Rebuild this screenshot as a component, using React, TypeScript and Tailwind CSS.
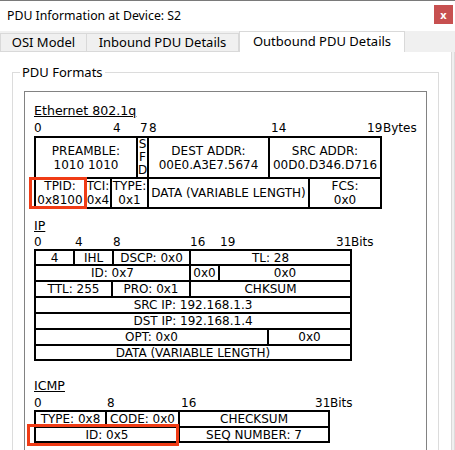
import React from 'react';

const ui = { fontFamily: '"Noto Sans", "Liberation Sans", sans-serif' };
const mono = { fontFamily: '"DejaVu Sans", Verdana, sans-serif' };

const CELL =
  'flex flex-col items-center justify-center shrink-0 border-r-2 border-b-2 border-black text-center whitespace-nowrap';

function Cell({ className, children }: { className: string; children: React.ReactNode }) {
  return <div className={`${CELL} ${className}`}>{children}</div>;
}

// ruler of byte / bit offsets above each header table
function Ruler({ marks, unit }: { marks: { label: string; w: string }[]; unit: string }) {
  return (
    <div className="flex leading-[13px]">
      {marks.map((m, i) => (
        <span key={i} className={`shrink-0 ${m.w}`}>
          {m.label}
        </span>
      ))}
      <span className="shrink-0">{unit}</span>
    </div>
  );
}

function Heading({ children, className }: { children: React.ReactNode; className: string }) {
  return <div className={`underline text-[12.6px] leading-[14px] ${className}`}>{children}</div>;
}

export default function App() {
  return (
    <div className="w-[455px] h-[450px] overflow-hidden bg-white border-t border-[#7a7a7a] flex flex-col text-black">
      {/* Title bar */}
      <div className="h-[30px] shrink-0 flex items-center justify-between pl-[7px] pr-[2px]">
        <span className="text-[12.3px]" style={ui}>
          PDU Information at Device: S2
        </span>
        <div className="w-[19px] h-[19px] mb-[3px] bg-[#c75050] flex items-center justify-center">
          <span className="text-white text-[11px] font-bold leading-none" style={ui}>
            x
          </span>
        </div>
      </div>

      {/* Tabs */}
      <div className="h-[21px] shrink-0 flex items-end bg-[#f0f0f0] text-[13px]" style={ui}>
        <div className="w-[87px] h-[19px] flex items-center justify-center border border-[#d9d9d9] bg-[#f0f0f0]">
          OSI Model
        </div>
        <div className="w-[152px] h-[19px] flex items-center justify-center border-t border-r border-b border-[#d9d9d9] bg-[#f0f0f0]">
          Inbound PDU Details
        </div>
        <div className="w-[166px] h-[21px] flex items-center justify-center border-t border-x border-[#d9d9d9] bg-white pb-[1px]">
          Outbound PDU Details
        </div>
      </div>

      {/* Content */}
      <div className="flex flex-1 min-h-0">
        <div className="w-[452px] shrink-0 bg-white border-r border-[#d9d9d9]">
          <div className="relative mt-[20px] ml-[12px] w-[427px] border border-[#dcdcdc] pl-[11px] pt-[18px] pb-[20px]">
            <span
              className="absolute left-[7px] top-[-9px] px-[2px] bg-white text-[13px] leading-[17px]"
              style={ui}
            >
              PDU Formats
            </span>

            <div className="relative w-[403px] border border-[#828282] pl-[9px] pt-[12px] pb-[20px] text-[12px]" style={mono}>
              {/* Ethernet 802.1q */}
              <Heading className="w-fit">Ethernet 802.1q</Heading>
              <div className="mt-[4px]">
                <Ruler
                  unit="Bytes"
                  marks={[
                    { label: '0', w: 'w-[79px]' },
                    { label: '4', w: 'w-[27px]' },
                    { label: '7', w: 'w-[9px]' },
                    { label: '8', w: 'w-[122px]' },
                    { label: '14', w: 'w-[96px]' },
                    { label: '19', w: 'w-[16px]' },
                  ]}
                />
              </div>
              <div className="mt-[1px] w-[348px] border-l-2 border-t-2 border-black leading-[14px]">
                <div className="flex h-[41px]">
                  <Cell className="w-[102px]">
                    <span>PREAMBLE:</span>
                    <span>1010 1010</span>
                  </Cell>
                  <Cell className="w-[11px] leading-[13px]">
                    <span>S</span>
                    <span>F</span>
                    <span>D</span>
                  </Cell>
                  <Cell className="w-[121px]">
                    <span>DEST ADDR:</span>
                    <span>00E0.A3E7.5674</span>
                  </Cell>
                  <Cell className="w-[112px]">
                    <span>SRC ADDR:</span>
                    <span>00D0.D346.D716</span>
                  </Cell>
                </div>
                <div className="flex h-[30px]">
                  <Cell className="w-[50px]">
                    <span>TPID:</span>
                    <span>0x8100</span>
                  </Cell>
                  <Cell className="w-[26px]">
                    <span>TCI:</span>
                    <span>0x4</span>
                  </Cell>
                  <Cell className="w-[37px]">
                    <span>TYPE:</span>
                    <span>0x1</span>
                  </Cell>
                  <Cell className="w-[161px]">DATA (VARIABLE LENGTH)</Cell>
                  <Cell className="w-[72px]">
                    <span>FCS:</span>
                    <span>0x0</span>
                  </Cell>
                </div>
              </div>

              {/* IP */}
              <Heading className="w-fit mt-[10px]">IP</Heading>
              <div className="mt-[3px]">
                <Ruler
                  unit="Bits"
                  marks={[
                    { label: '0', w: 'w-[41px]' },
                    { label: '4', w: 'w-[38px]' },
                    { label: '8', w: 'w-[77px]' },
                    { label: '16', w: 'w-[30px]' },
                    { label: '19', w: 'w-[116px]' },
                    { label: '31', w: 'w-[15px]' },
                  ]}
                />
              </div>
              <div className="w-[318px] border-l-2 border-t-2 border-black leading-[14px]">
                <div className="flex h-[15px]">
                  <Cell className="w-[39px]">4</Cell>
                  <Cell className="w-[39px]">IHL</Cell>
                  <Cell className="w-[77px]">DSCP: 0x0</Cell>
                  <Cell className="w-[161px]">TL: 28</Cell>
                </div>
                <div className="flex h-[16px]">
                  <Cell className="w-[155px]">ID: 0x7</Cell>
                  <Cell className="w-[29px]">0x0</Cell>
                  <Cell className="w-[132px]">0x0</Cell>
                </div>
                <div className="flex h-[16px]">
                  <Cell className="w-[77px]">TTL: 255</Cell>
                  <Cell className="w-[78px]">PRO: 0x1</Cell>
                  <Cell className="w-[161px]">CHKSUM</Cell>
                </div>
                <div className="flex h-[16px]">
                  <Cell className="w-[316px]">SRC IP: 192.168.1.3</Cell>
                </div>
                <div className="flex h-[16px]">
                  <Cell className="w-[316px]">DST IP: 192.168.1.4</Cell>
                </div>
                <div className="flex h-[16px]">
                  <Cell className="w-[233px]">OPT: 0x0</Cell>
                  <Cell className="w-[83px]">0x0</Cell>
                </div>
                <div className="flex h-[15px]">
                  <Cell className="w-[316px]">DATA (VARIABLE LENGTH)</Cell>
                </div>
              </div>

              {/* ICMP */}
              <Heading className="w-fit mt-[18px]">ICMP</Heading>
              <div className="mt-[4px]">
                <Ruler
                  unit="Bits"
                  marks={[
                    { label: '0', w: 'w-[73px]' },
                    { label: '8', w: 'w-[74px]' },
                    { label: '16', w: 'w-[134px]' },
                    { label: '31', w: 'w-[15px]' },
                  ]}
                />
              </div>
              <div className="w-[296px] border-l-2 border-t-2 border-black leading-[14px]">
                <div className="flex h-[16px]">
                  <Cell className="w-[71px]">TYPE: 0x8</Cell>
                  <Cell className="w-[73px]">CODE: 0x0</Cell>
                  <Cell className="w-[150px]">CHECKSUM</Cell>
                </div>
                <div className="flex h-[15px]">
                  <Cell className="w-[144px]">ID: 0x5</Cell>
                  <Cell className="w-[150px]">SEQ NUMBER: 7</Cell>
                </div>
              </div>

              {/* highlight annotations */}
              <div className="absolute left-[4px] top-[85px] w-[58px] h-[32px] border-[3px] border-[#f03c16]" />
              <div className="absolute left-[2px] top-[332px] w-[152px] h-[22px] border-[3px] border-[#f03c16]" />
            </div>
          </div>
        </div>
        <div className="flex-1 bg-[#f0f0f0] border-r border-[#dcdcdc]" />
      </div>
    </div>
  );
}
